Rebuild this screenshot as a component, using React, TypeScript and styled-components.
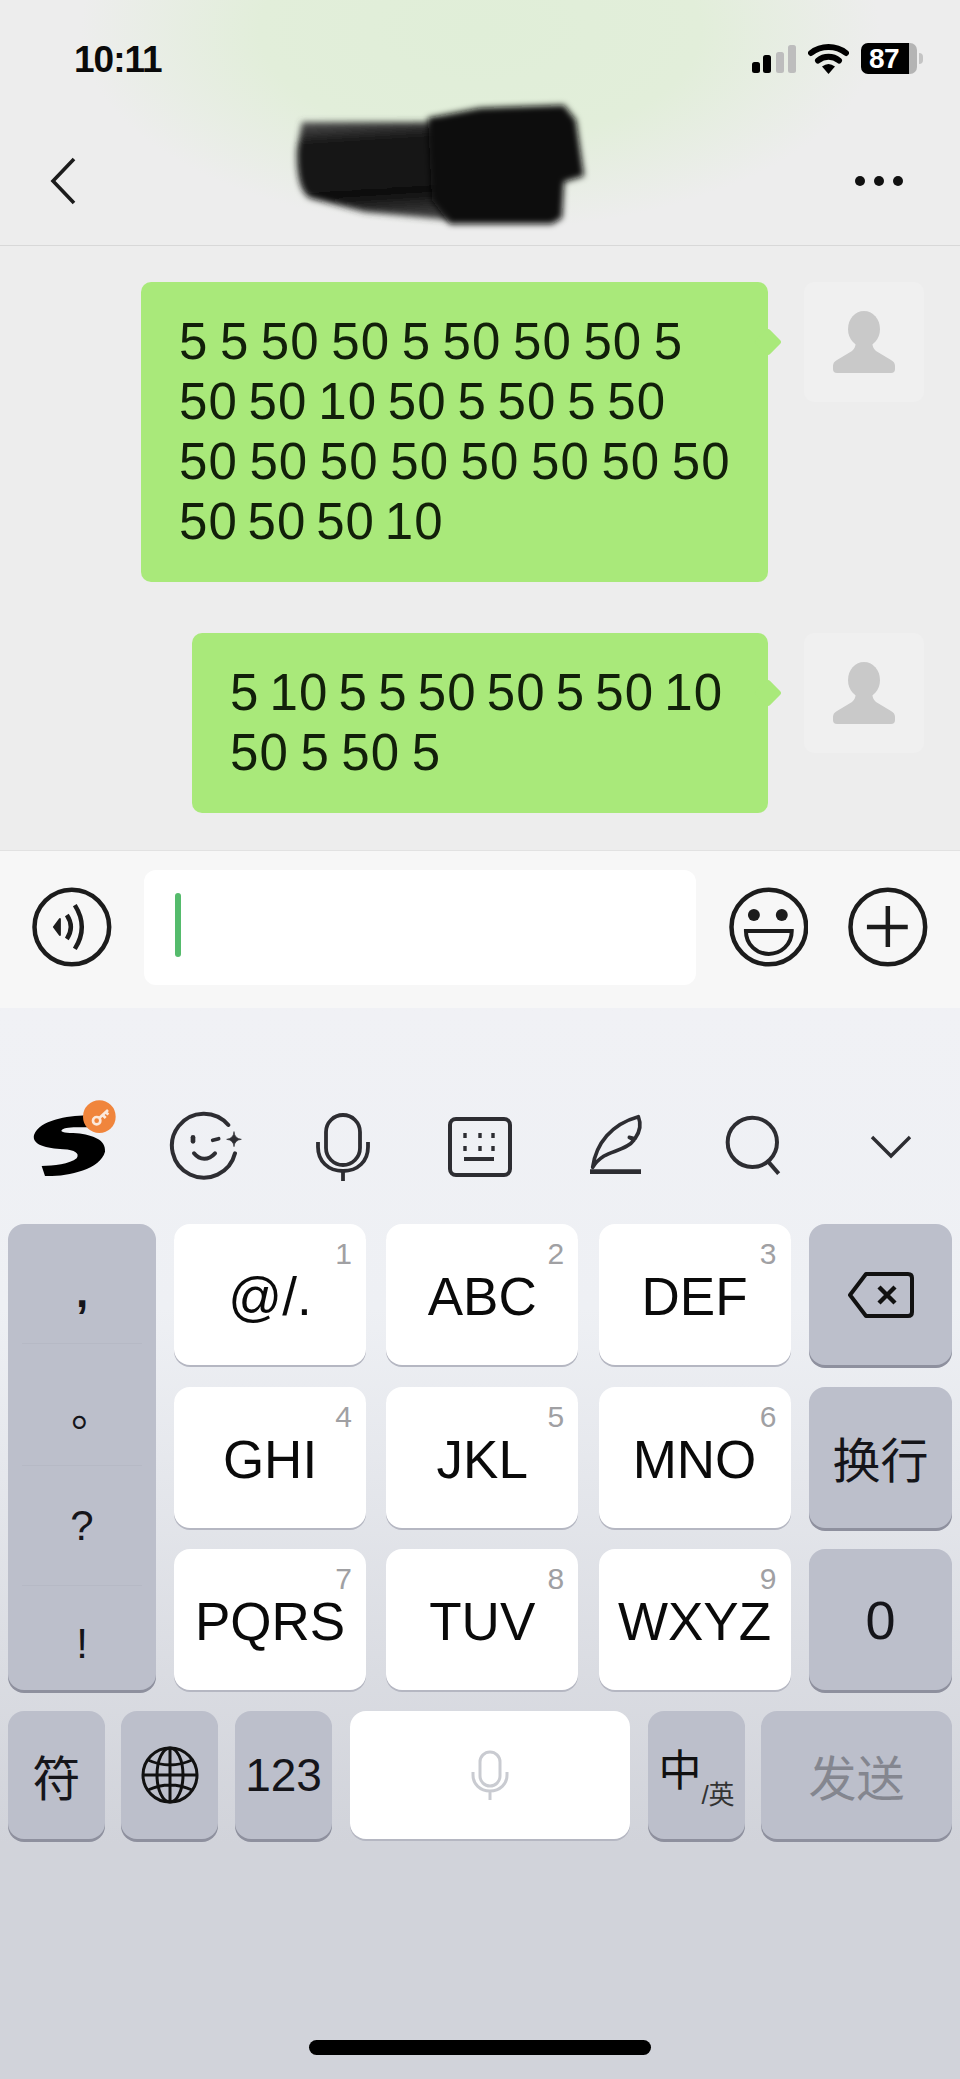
import React from "react";
import styled, { createGlobalStyle } from "styled-components";

const Global = createGlobalStyle`
  html, body { margin: 0; padding: 0; background: #d1d3da; }
  * { box-sizing: border-box; }
  body { font-family: "Liberation Sans", "Noto Sans CJK SC", sans-serif; color: #111; }
`;

const Page = styled.div`
  width: 960px; height: 2079px; display: flex; flex-direction: column; overflow: hidden; position: relative;
`;
const Header = styled.header`
  height: 246px; flex: none; position: relative; border-bottom: 1px solid #d8d8d8;
  background: radial-gradient(ellipse 400px 200px at 480px 30px, #e0eed8 0%, #e2eeda 55%, #ededed 100%);
`;
const StatusBar = styled.div`
  height: 117px; padding: 43px 43px 0 74px; display: flex; justify-content: space-between; align-items: flex-start;
`;
const Time = styled.div`
  font-size: 37px; font-weight: 700; line-height: 31px; letter-spacing: -1px; color: #0a0a0a; padding-top: 1px;
`;
const StatusIcons = styled.div`
  display: flex; align-items: center; gap: 12px; height: 31px;
`;
const Battery = styled.div`
  width: 56px; height: 31px; border-radius: 7px; position: relative; color: #fff; font-weight: 700; font-size: 28px;
  line-height: 31px; padding-left: 8px; letter-spacing: -0.5px;
  background: linear-gradient(90deg, #000 0 85%, #b4b4b4 85% 100%);
  &::after {
    content: ""; position: absolute; right: -6px; top: 10px; width: 4px; height: 11px;
    border-radius: 0 4px 4px 0; background: #c4c4c4;
  }
`;
const NavRow = styled.div`
  height: 128px; padding: 0 56px 0 50px; display: flex; justify-content: space-between; align-items: center;
`;
const Scribble = styled.svg`
  position: absolute; left: 280px; top: 90px;
`;

const Chat = styled.main`
  height: 604px; flex: none; background: #ededed; padding: 36px 36px 0 0; display: flex; flex-direction: column; gap: 51px;
`;
const MessageRow = styled.div`
  display: flex; justify-content: flex-end; align-items: flex-start; gap: 36px;
`;
const Bubble = styled.div<{ $w: number }>`
  width: ${p => p.$w}px; background: #a9e97a; border-radius: 10px; padding: 30px 0 30px 38px; position: relative;
  font-size: 51px; line-height: 60px; color: #12200a; white-space: pre; letter-spacing: 1.1px;
  &::after {
    content: ""; position: absolute; right: -10px; top: 50px; width: 20px; height: 20px;
    background: #a9e97a; transform: rotate(45deg); border-radius: 3px;
  }
`;
const MessageLine = styled.div<{ $ws: number }>`
  word-spacing: ${p => p.$ws}px;
`;
const Avatar = styled.div`
  width: 120px; height: 120px; border-radius: 10px; background: #f0f0f0; flex: none; display: flex;
`;

const InputBar = styled.section`
  height: 158px; flex: none; background: #f7f7f7; border-top: 1px solid #e2e2e2; padding: 0 32px 5px;
  display: flex; align-items: center;
`;
const InputBox = styled.div`
  width: 552px; height: 115px; margin: 0 33px 0 32px; background: #fff; border-radius: 12px; padding: 23px 31px; flex: none;
`;
const Caret = styled.div`
  width: 6px; height: 64px; background: #55bb6c; border-radius: 3px;
`;
const PlusIcon = styled.svg`
  margin-left: 40px;
`;

const Keyboard = styled.section`
  flex: 1; padding: 0 8px;
  background: linear-gradient(180deg, #f0f1f5 0%, #eef0f4 28%, #e6e8ed 42%, #dadce2 62%, #d1d3da 78%, #d1d3da 100%);
`;
const Toolbar = styled.div`
  margin: 84px 0 22px -8px; height: 110px; display: grid; grid-template-columns: repeat(7, 137px);
  justify-items: center; align-items: center; color: #2d2d32;
`;
const KeysArea = styled.div`
  display: flex; gap: 18px; align-items: flex-start;
`;
const PunctColumn = styled.div`
  width: 148px; height: 466px; background: #bcbfcb; border-radius: 16px; box-shadow: 0 3px 0 #8e909e;
  display: grid; grid-template-rows: 120px 122px 120px 104px; padding: 0 14px; flex: none;
`;
const PunctCell = styled.div<{ $pt: number; $last?: boolean; $bold?: boolean }>`
  display: flex; justify-content: center; align-items: flex-start; font-size: ${p => (p.$bold ? 44 : 42)}px;
  line-height: 48px; color: #15151a; font-weight: ${p => (p.$bold ? 700 : 400)};
  padding-top: ${p => p.$pt}px;
  border-bottom: ${p => (p.$last ? "none" : "1px solid #b6b9c5")};
`;
const CenterGrid = styled.div`
  width: 617px; display: grid; grid-template-columns: repeat(3, 192px); grid-auto-rows: 141px; column-gap: 20.25px; row-gap: 21.5px; flex: none;
`;
const SideColumn = styled.div`
  width: 143px; display: grid; grid-auto-rows: 141px; row-gap: 21.5px; flex: none;
`;
const LetterKey = styled.div`
  background: #fff; border-radius: 16px; box-shadow: 0 2px 0 #b5b7c2; position: relative; display: flex;
  align-items: center; justify-content: center; font-size: 53px; color: #0a0a0a; padding-top: 4px;
`;
const KeyNumber = styled.span`
  position: absolute; right: 14px; top: 12px; font-size: 30px; line-height: 36px; color: #a0a0a3;
`;
const GrayKey = styled.div<{ $w?: number; $c?: string; $fs?: number; $ml?: number }>`
  ${p => (p.$w ? `width: ${p.$w}px;` : "")}
  margin-left: ${p => p.$ml ?? 0}px;
  background: #bcbfcb; border-radius: 16px; box-shadow: 0 3px 0 #8e909e; display: flex; align-items: center; justify-content: center;
  font-size: ${p => p.$fs ?? 48}px; color: ${p => p.$c ?? "#15151a"}; flex: none;
`;
const BottomRow = styled.div`
  margin-top: 20.5px; height: 128px; display: flex; gap: 16px;
`;
const SpaceKey = styled.div`
  width: 280px; margin-left: 2px; background: #fff; border-radius: 16px; box-shadow: 0 2px 0 #b5b7c2; display: flex; align-items: center; justify-content: center; flex: none;
`;
const LangMain = styled.span`
  font-size: 43px; line-height: 44px; margin-top: -8px; color: #111;
`;
const LangSub = styled.span`
  font-size: 26px; line-height: 28px; margin-top: 40px; color: #333;
`;
const HomeIndicator = styled.div`
  position: absolute; left: 309px; top: 2040px; width: 342px; height: 15px; border-radius: 8px; background: #000;
`;

const Person = () => (
  <svg width="120" height="120" viewBox="0 0 120 120">
    <ellipse cx="60" cy="47" rx="16" ry="18" fill="#c9c9c9" />
    <path d="M33 91H87Q91 91 91 87V84Q91 80 87 78L72 69Q68 66 68 58H52Q52 66 48 69L33 78Q29 80 29 84V87Q29 91 33 91Z" fill="#c9c9c9" />
  </svg>
);

/* The reference font has a narrow "1": a line holding one takes the difference out of its spaces. */
const lineWordSpacing = (line: string) => {
  const ones = line.split("1").length - 1;
  const spaces = line.split(" ").length - 1;
  return -3.8 - (ones * 5.5) / Math.max(spaces, 1);
};

const Msg = ({ w, lines }: { w: number; lines: string[] }) => (
  <MessageRow>
    <Bubble $w={w}>
      {lines.map(line => (
        <MessageLine key={line} $ws={lineWordSpacing(line)}>{line}</MessageLine>
      ))}
    </Bubble>
    <Avatar><Person /></Avatar>
  </MessageRow>
);

const letters: [string, string][] = [
  ["@/.", "1"], ["ABC", "2"], ["DEF", "3"], ["GHI", "4"], ["JKL", "5"], ["MNO", "6"], ["PQRS", "7"], ["TUV", "8"], ["WXYZ", "9"],
];

export default function App() {
  return (
    <Page>
      <Global />
      <Header>
        <StatusBar>
          <Time>10:11</Time>
          <StatusIcons>
            <svg width="44" height="28" viewBox="0 0 44 28">
              <rect x="0" y="17" width="8" height="11" rx="2.5" fill="#000" />
              <rect x="11" y="10" width="8" height="18" rx="2.5" fill="#000" />
              <rect x="24" y="7" width="8" height="21" rx="2.5" fill="#bdbdbd" />
              <rect x="36" y="0" width="8" height="28" rx="2.5" fill="#bdbdbd" />
            </svg>
            <svg width="41" height="30" viewBox="0 0 41 30">
              <path d="M3 9C13 1 28 1 38 9" fill="none" stroke="#000" strokeWidth="6" strokeLinecap="round" />
              <path d="M10 16.5C16 11.5 25 11.5 31 16.5" fill="none" stroke="#000" strokeWidth="6" strokeLinecap="round" />
              <path d="M14 22.5Q20.5 17.5 27 22.5L20.5 30Z" fill="#000" />
            </svg>
            <Battery>87</Battery>
          </StatusIcons>
        </StatusBar>
        <NavRow>
          <svg width="26" height="48" viewBox="0 0 26 48">
            <path d="M24 2L3 24L24 46" fill="none" stroke="#1c1c1c" strokeWidth="3.6" />
          </svg>
          <svg width="50" height="12" viewBox="0 0 50 12">
            <circle cx="6" cy="6" r="5" fill="#111" /><circle cx="25" cy="6" r="5" fill="#111" /><circle cx="44" cy="6" r="5" fill="#111" />
          </svg>
        </NavRow>
        <Scribble width="320" height="150" viewBox="0 0 320 150">
          <defs>
            <filter id="sb" x="-10%" y="-10%" width="120%" height="120%"><feGaussianBlur stdDeviation="3" /></filter>
            <linearGradient id="sg" x1="0" y1="0" x2="0.1" y2="1">
              <stop offset="0" stopColor="#555" /><stop offset="0.22" stopColor="#161616" /><stop offset="0.8" stopColor="#111" /><stop offset="1" stopColor="#3a3a3a" />
            </linearGradient>
          </defs>
          <path d="M22 32L160 32L172 130L85 122L30 108Q16 100 17 60Z" fill="url(#sg)" filter="url(#sb)" />
          <path d="M148 28L200 18L284 15L296 30L304 86L284 92L282 128L272 134L170 134L152 110Z" fill="#0d0d0d" filter="url(#sb)" />
        </Scribble>
      </Header>

      <Chat>
        <Msg w={627} lines={["5 5 50 50 5 50 50 50 5", "50 50 10 50 5 50 5 50", "50 50 50 50 50 50 50 50", "50 50 50 10"]} />
        <Msg w={576} lines={["5 10 5 5 50 50 5 50 10", "50 5 50 5"]} />
      </Chat>

      <InputBar>
        <svg width="80" height="80" viewBox="0 0 80 80" fill="none" stroke="#1c1c1c">
          <circle cx="40" cy="40" r="37.5" strokeWidth="4.5" />
          <path d="M22 40L28 32V48Z" fill="#1c1c1c" strokeWidth="2" strokeLinejoin="round" />
          <path d="M35 28Q43 40 35 52" strokeWidth="4.5" />
          <path d="M43 18Q57 40 43 62" strokeWidth="4.5" />
        </svg>
        <InputBox><Caret /></InputBox>
        <svg width="80" height="80" viewBox="0 0 80 80" fill="none" stroke="#1c1c1c">
          <circle cx="40" cy="40" r="37.5" strokeWidth="4.5" />
          <circle cx="25" cy="28" r="6" fill="#1c1c1c" stroke="none" />
          <circle cx="53" cy="28" r="6" fill="#1c1c1c" stroke="none" />
          <path d="M17 44H63C63 58 52 67 40 67C28 67 17 58 17 44Z" strokeWidth="4" />
        </svg>
        <PlusIcon width="80" height="80" viewBox="0 0 80 80" fill="none" stroke="#1c1c1c">
          <circle cx="40" cy="40" r="37.5" strokeWidth="4.5" />
          <path d="M19 40H60M40 19V60" strokeWidth="4.5" />
        </PlusIcon>
      </InputBar>

      <Keyboard>
        <Toolbar>
          <svg width="98" height="98" viewBox="0 24 294 294">
            <path d="M200 76C140 78 60 90 42 135C35 165 80 175 130 178C165 180 180 190 170 205C150 222 100 228 65 228L75 258C140 260 240 240 255 185C258 150 220 135 170 130C140 128 120 128 125 120C135 110 175 112 205 112Z" fill="#000" />
            <circle cx="238" cy="80" r="49" fill="#f0853c" />
            <g fill="none" stroke="#fbe9dc" strokeWidth="8">
              <circle cx="230" cy="92" r="11" />
              <path d="M238 84L264 60M248 75L257 84M257 66L265 74" />
            </g>
          </svg>
          <svg width="76" height="74" viewBox="444 60 228 222" fill="none" stroke="currentColor" strokeWidth="12" strokeLinecap="round">
            <path d="M625 105A96 96 0 1 0 645 190" />
            <path d="M519 142V154" strokeWidth="14" />
            <path d="M578 151L596 146" strokeWidth="11" />
            <path d="M522 190C540 212 565 212 585 190" />
            <path d="M642 126Q644 146 664 148Q644 150 642 170Q640 150 620 148Q640 146 642 126Z" fill="currentColor" strokeWidth="2" />
          </svg>
          <svg width="54" height="68" viewBox="0 0 54 68" fill="none" stroke="currentColor" strokeWidth="3.8">
            <rect x="10" y="2" width="34" height="50" rx="17" />
            <path d="M2 29V34C2 48 12 58 27 58C42 58 52 48 52 34V29" />
            <path d="M27 58V68" />
          </svg>
          <svg width="66" height="62" viewBox="0 0 66 62" fill="none" stroke="currentColor">
            <rect x="3" y="3" width="60" height="56" rx="6" strokeWidth="4" />
            <path d="M18 17V22M33 17V22M46 17V22M18 30V35M33 30V35M46 30V35" strokeWidth="3.4" />
            <path d="M17 43H47" strokeWidth="4" />
          </svg>
          <svg width="60" height="70" viewBox="51 36 180 210" fill="none" stroke="currentColor" strokeWidth="11" strokeLinejoin="round">
            <path d="M68 202C78 130 125 72 205 50C214 72 210 95 195 116L178 112L192 120C175 146 130 152 102 168C88 177 76 188 68 202Z" />
            <path d="M60 215H213" strokeWidth="14" />
          </svg>
          <svg width="60" height="70" viewBox="462 36 180 210" fill="none" stroke="currentColor" strokeWidth="12">
            <circle cx="547" cy="127" r="74" />
            <path d="M592 182L626 221" />
          </svg>
          <svg width="42" height="24" viewBox="0 0 42 24" fill="none" stroke="currentColor" strokeWidth="3.4">
            <path d="M2 2L21 21L40 2" />
          </svg>
        </Toolbar>

        <KeysArea>
          <PunctColumn>
            <PunctCell $pt={44} $bold>,</PunctCell>
            <PunctCell $pt={44}>｡</PunctCell>
            <PunctCell $pt={36}>?</PunctCell>
            <PunctCell $pt={34} $last>!</PunctCell>
          </PunctColumn>
          <CenterGrid>
            {letters.map(([label, num]) => (
              <LetterKey key={label}>
                {label}
                <KeyNumber>{num}</KeyNumber>
              </LetterKey>
            ))}
          </CenterGrid>
          <SideColumn>
            <GrayKey>
              <svg width="66" height="46" viewBox="0 0 66 46" fill="none" stroke="#111" strokeWidth="4" strokeLinejoin="round">
                <path d="M18 2H60Q64 2 64 6V40Q64 44 60 44H18L2 23Z" />
                <path d="M31 15L47 31M47 15L31 31" strokeWidth="4.4" />
              </svg>
            </GrayKey>
            <GrayKey>换行</GrayKey>
            <GrayKey $fs={54}>0</GrayKey>
          </SideColumn>
        </KeysArea>

        <BottomRow>
          <GrayKey $w={97}>符</GrayKey>
          <GrayKey $w={97}>
            <svg width="58" height="58" viewBox="0 0 58 58" fill="none" stroke="#111" strokeWidth="3">
              <circle cx="29" cy="29" r="27" />
              <ellipse cx="29" cy="29" rx="13" ry="27" />
              <path d="M29 2V56M2 29H56M7 14Q29 24 51 14M7 44Q29 34 51 44" />
            </svg>
          </GrayKey>
          <GrayKey $w={97} $fs={46} $ml={1}>123</GrayKey>
          <SpaceKey>
            <svg width="38" height="50" viewBox="0 0 38 50" fill="none" stroke="#c9cbd1" strokeWidth="3">
              <rect x="9" y="2" width="20" height="34" rx="10" />
              <path d="M2 22V25C2 34 9 41 19 41C29 41 36 34 36 25V22M19 41V50" />
            </svg>
          </SpaceKey>
          <GrayKey $w={97} $ml={2}>
            <LangMain>中</LangMain>
            <LangSub>/英</LangSub>
          </GrayKey>
          <GrayKey $w={191} $c="#84868f">发送</GrayKey>
        </BottomRow>
      </Keyboard>
      <HomeIndicator />
    </Page>
  );
}
